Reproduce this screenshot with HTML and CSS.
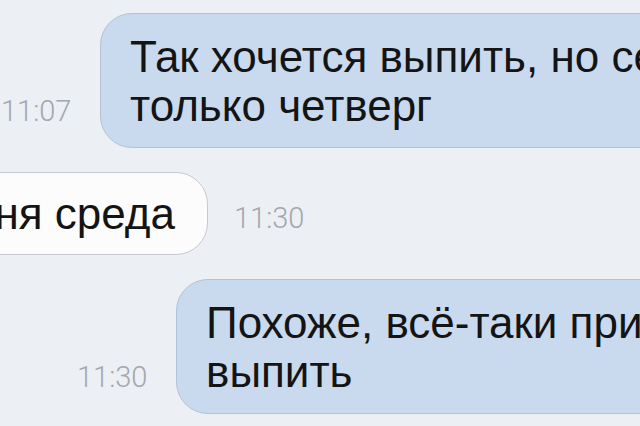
FILE: index.html
```html
<!DOCTYPE html>
<html lang="ru">
<head>
    <meta charset="UTF-8">
    <meta name="viewport" content="width=device-width, initial-scale=1.0">
    <title>Чат</title>
    <link rel="stylesheet" href="styles.css">
</head>
<body>
<div class="chat">
    <div class="row row-out-first">
        <span class="time">11:07</span>
        <div class="bubble bubble-out">Так хочется выпить, но сегодня<br>только четверг</div>
    </div>

    <div class="row row-in">
        <div class="bubble bubble-in">А сегодня среда</div>
        <span class="time">11:30</span>
    </div>

    <div class="row row-out-second">
        <span class="time">11:30</span>
        <div class="bubble bubble-out">Похоже, всё-таки придётся<br>выпить</div>
    </div>
</div>
</body>
</html>
```

FILE: styles.css
```css
body {
    margin: 0;
    height: 100vh;
    overflow: hidden;
    background-color: #eceff4;
    font-family: 'Liberation Sans', Arial, sans-serif;
}

.chat {
    display: flex;
    flex-direction: column;
    gap: 24px;
    padding-top: 13px;
}

.row {
    display: flex;
    align-items: flex-end;
    gap: 31px;
}

.row-out-first {
    padding-left: 1px;
}

.row-in {
    width: 302px;
    justify-content: flex-end;
    gap: 26px;
}

.row-out-second {
    padding-left: 77px;
}

.time {
    flex-shrink: 0;
    width: 68px;
    font-family: 'Roboto', 'Liberation Sans', sans-serif;
    font-weight: 300;
    font-size: 29px;
    line-height: 29px;
    color: #a3a7ae;
    margin-bottom: 22px;
}

.bubble {
    flex-shrink: 0;
    font-size: 44px;
    line-height: 49px;
    color: #141414;
    white-space: nowrap;
    padding: 18px 30px 17px 29px;
    border-radius: 32px;
}

.bubble-out {
    background-color: #c9daef;
    border: 1px solid #b3c2d4;
}

.bubble-in {
    background-color: #fcfcfd;
    border: 1px solid #c6cad0;
    padding: 16px 32px 16px 30px;
}
```
